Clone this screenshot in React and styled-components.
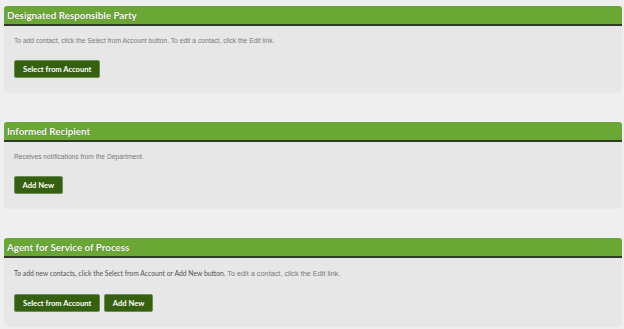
import React from "react";
import styled, { createGlobalStyle } from "styled-components";

const Global = createGlobalStyle`
  html, body { margin: 0; padding: 0; background: #efefef; }
  body { font-family: "Liberation Sans", Arial, sans-serif; }
`;

const Page = styled.div`
  display: flex;
  flex-direction: column;
  gap: 29px;
  padding: 6px 2px 0 4px;
`;

const Section = styled.section`
  display: flex;
  flex-direction: column;
`;

const Header = styled.div`
  height: 18px;
  background: #6ba735;
  border-bottom: 2px solid #2f3a28;
  border-radius: 3px 3px 0 0;
  display: flex;
  align-items: center;
  padding-left: 3px;
  color: #fff;
  font-family: Lato, "Open Sans", sans-serif;
  font-weight: 700;
  font-size: 9.8px;
  text-shadow: 0 0 1px rgba(0,0,0,0.45);
`;

const Body = styled.div`
  background: #e7e7e7;
  border-radius: 0 0 5px 5px;
  padding: 10px 10px 15px 10px;
  display: flex;
  flex-direction: column;
  align-items: flex-start;
  gap: ${(p) => p.$gap || 14}px;
`;

const Note = styled.p`
  margin: 0;
  line-height: 10px;
  font-size: 6.7px;
  color: #7a7a7a;
  white-space: nowrap;
`;

const Strong = styled.span`
  font-family: Lato, "Open Sans", sans-serif;
  font-size: 6.8px;
  color: #555;
`;

const Soft = styled.span`
  font-size: 7.3px;
`;

const Buttons = styled.div`
  display: flex;
  gap: 4px;
`;

const Button = styled.button`
  height: 18px;
  padding: 0 ${(p) => (p.$wide ? 8 : 7.5)}px;
  background: #35600f;
  border: 1px solid #6e8c55;
  border-radius: 2px;
  color: #fff;
  font-family: Lato, "Open Sans", sans-serif;
  font-weight: 700;
  font-size: 7.6px;
  cursor: pointer;
`;

export default function App() {
  return (
    <>
      <Global />
      <Page>
        <Section>
          <Header>Designated Responsible Party</Header>
          <Body>
            <Note>To add contact, click the Select from Account button. To edit a contact, click the Edit link.</Note>
            <Buttons>
              <Button $wide>Select from Account</Button>
            </Buttons>
          </Body>
        </Section>
        <Section>
          <Header>Informed Recipient</Header>
          <Body>
            <Note>Receives notifications from the Department.</Note>
            <Buttons>
              <Button>Add New</Button>
            </Buttons>
          </Body>
        </Section>
        <Section>
          <Header>Agent for Service of Process</Header>
          <Body $gap={15}>
            <Note>
              <Strong>To add new contacts, click the Select from Account or Add New button.</Strong>{" "}
              <Soft>To edit a contact, click the Edit link.</Soft>
            </Note>
            <Buttons>
              <Button $wide>Select from Account</Button>
              <Button>Add New</Button>
            </Buttons>
          </Body>
        </Section>
      </Page>
    </>
  );
}
